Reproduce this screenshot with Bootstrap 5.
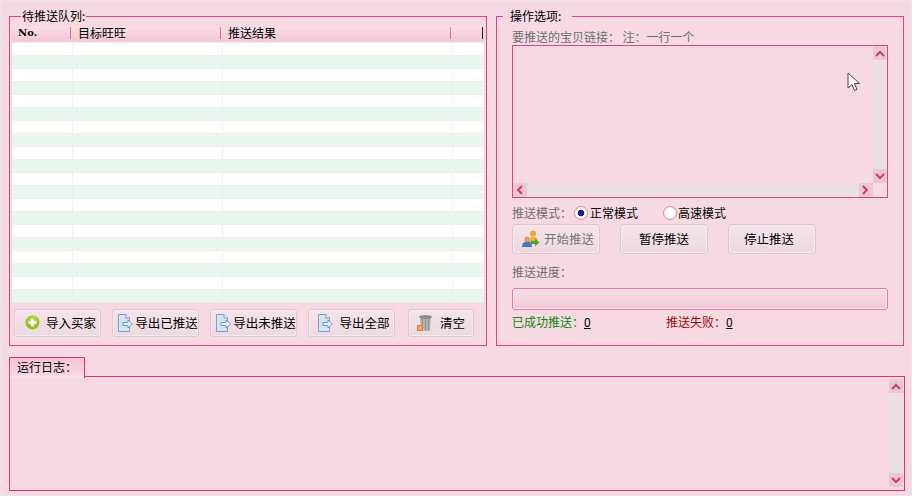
<!DOCTYPE html>
<html lang="zh"><head><meta charset="utf-8"><title>推送</title>
<link href="https://cdn.jsdelivr.net/npm/bootstrap@5.3.0/dist/css/bootstrap.min.css" rel="stylesheet">
<style>
html,body{margin:0;height:100%}
body{background:#f7d9e3;font:12px/14px "Noto Sans CJK SC","Liberation Sans",sans-serif;color:#000;overflow:hidden}
.shell{width:912px;height:496px;border:1px solid #ebe6e8;padding:8px 7px 0 8px;position:relative}
.tophalf{height:337px;gap:9px}
fieldset.grp{border:1px solid #d9487c;margin:0;padding:0;height:337px;min-width:0}
fieldset.grp legend{float:none;width:auto;font-size:12px;line-height:14px;height:14px;margin:0;padding:0}
.grp-left{width:479px;padding:0 2px!important}
.grp-left legend{margin-left:9px!important;padding:0 1px!important}
.grp-right{width:409px;padding:0 15px!important}
.grp-right legend{margin-left:-9px!important;padding:0 11px 0 7px!important}
.qtable{width:472px;margin:3px 0 0;table-layout:fixed;border-collapse:collapse;--bs-table-bg:transparent}
.qtable th{height:16px;padding:0 0 2px 6px;font-weight:400;line-height:13px;background:linear-gradient(#f9dde5,#f4c8d5);border-bottom:1px solid #eef0ee;position:relative;font-size:12px}
.qtable th.hs::after{content:"";position:absolute;right:1px;top:1px;height:12px;width:1px;background:#e8708f}
.qtable th.he::after{content:"";position:absolute;right:1px;top:1px;height:12px;width:1px;background:#222}
.qtable th.nohead{font:700 10px/13px "DejaVu Serif","Liberation Serif",serif}
.qtable td{height:13px;padding:0;border-right:1px solid #eeeeee;border-bottom:1px solid #eeeeee;background:#fff}
.qtable tr:nth-child(even) td{background:#e8f6ee}
.qtable td:last-child{border-right:0}
.skbtn{height:28px;border:1px solid #e0c8d2;border-radius:3px;background:linear-gradient(#f6e4ea,#ecd9e0);font-size:12.5px;line-height:14px;padding:0;color:#000;display:flex;align-items:center;justify-content:center;gap:2px;box-shadow:inset 0 0 0 1px #f7e9ee}
.skbtn svg{flex:none}
.skbtn.off{color:#777}
.skbtn.nudge{padding-left:4px}
.skbtn.nudge-m{padding-left:6px}
.skbtn.nudge-l{padding-right:6px}
.btnrow-l{margin:6px 0 0 2px;gap:11px}
.w87{width:87px}.w66{width:66px}.w88{width:88px}
.gap-last{margin-left:2px}
.graytxt{color:#6f6f6f}
.urlbox{width:376px;height:153px;border:1px solid #d9487c;display:grid;grid-template-columns:1fr 14px;grid-template-rows:1fr 14px;position:relative;margin-top:1px}
.vbar{display:flex;flex-direction:column;background:#ece0e6;justify-content:space-between}
.hbar{display:flex;background:#ece0e6;justify-content:space-between}
.sbtn{width:14px;height:14px;background:#e8c8d6;display:flex;align-items:center;justify-content:center;flex:none}
.cursorpic{position:absolute;left:334px;top:26px}
.radio-sk{width:14px;height:14px;margin:0;appearance:none;border:1px solid #d98aa0;border-radius:50%;background:radial-gradient(circle,#fff 40%,#eee 80%);flex:none}
.radio-sk:checked{background:radial-gradient(circle,#1a1a9a 0 3px,#fff 3.6px,#eee 90%)}
.moderow{margin-top:7px;height:16px;align-items:center}
.btnrow-r{margin-top:3px;gap:20px}
.btnrow-r .skbtn{height:30px}
.progressbar{width:376px;height:22px;border:1px solid #ec7aa0;border-radius:3px;background:linear-gradient(#f5dfe6,#f2c7d5);box-shadow:inset 0 0 0 1px #f8e6ec;margin-top:9px}
.stats{margin-top:5px;height:14px}
.okc{color:#0a8a0a}.failc{color:#990a0a}
.stats u{color:#000}
.lbl-top{margin-top:7px;height:14px}
.logtab{width:76px;height:21px;border:1px solid #e0326f;border-bottom:0;background:linear-gradient(#f8c4d5,#f7d5df 80%,#f8e6ec);padding:2px 0 0 7px;position:relative;z-index:1;font-size:12px;margin:11px 0 -2px 0}
.logpanel{width:896px;height:115px;border:1px solid #e0326f;padding:2px 1px 2px 0;display:flex;justify-content:flex-end}
.logpanel .vbar{width:14px;height:108px}
</style></head><body>
<div class="shell d-flex flex-column">
 <div class="tophalf d-flex">
  <fieldset class="grp grp-left">
   <legend>待推送队列:</legend>
   <table class="qtable"><colgroup><col style="width:60px"><col style="width:150px"><col style="width:230px"><col></colgroup>
    <thead><tr><th class="nohead hs">No.</th><th class="hs">目标旺旺</th><th class="hs">推送结果</th><th class="he"></th></tr></thead>
    <tbody>
    <tr><td></td><td></td><td></td><td></td></tr><tr><td></td><td></td><td></td><td></td></tr>
    <tr><td></td><td></td><td></td><td></td></tr><tr><td></td><td></td><td></td><td></td></tr>
    <tr><td></td><td></td><td></td><td></td></tr><tr><td></td><td></td><td></td><td></td></tr>
    <tr><td></td><td></td><td></td><td></td></tr><tr><td></td><td></td><td></td><td></td></tr>
    <tr><td></td><td></td><td></td><td></td></tr><tr><td></td><td></td><td></td><td></td></tr>
    <tr><td></td><td></td><td></td><td></td></tr><tr><td></td><td></td><td></td><td></td></tr>
    <tr><td></td><td></td><td></td><td></td></tr><tr><td></td><td></td><td></td><td></td></tr>
    <tr><td></td><td></td><td></td><td></td></tr><tr><td></td><td></td><td></td><td></td></tr>
    <tr><td></td><td></td><td></td><td></td></tr><tr><td></td><td></td><td></td><td></td></tr>
    <tr><td></td><td></td><td></td><td></td></tr><tr><td></td><td></td><td></td><td></td></tr>
    </tbody>
   </table>
   <div class="d-flex btnrow-l">
    <button class="skbtn w87 nudge-m" style="gap:6px"><svg width="15" height="15" viewBox="0 0 15 15"><circle cx="7.500" cy="7.500" r="7" fill="#8cc21f"/><circle cx="7.500" cy="6" r="5" fill="#a8d63c"/><path d="M6.200 3.500h2.600v2.700h2.700v2.600H8.800v2.700H6.200V8.800H3.500V6.200h2.700z" fill="#fff"/></svg>导入买家</button>
    <button class="skbtn w87 nudge"><svg width="16" height="18" viewBox="0 0 16 18"><path d="M1.500.5h7.500l3.500 3.500v13.500h-11z" fill="#d3e4f3" stroke="#7f9fc4"/><path d="M9 .5v3.500h3.500" fill="#f4f9fd" stroke="#7f9fc4"/><path d="M6 8.500h5v-2.500l4.500 4-4.500 4v-2.500H6z" fill="#f2f7fb" stroke="#5f8fc0" stroke-width=".9"/></svg>导出已推送</button>
    <button class="skbtn w87 nudge"><svg width="16" height="18" viewBox="0 0 16 18"><path d="M1.500.5h7.500l3.500 3.500v13.500h-11z" fill="#d3e4f3" stroke="#7f9fc4"/><path d="M9 .5v3.500h3.500" fill="#f4f9fd" stroke="#7f9fc4"/><path d="M6 8.500h5v-2.500l4.500 4-4.500 4v-2.500H6z" fill="#f2f7fb" stroke="#5f8fc0" stroke-width=".9"/></svg>导出未推送</button>
    <button class="skbtn w87 nudge" style="gap:6px"><svg width="16" height="18" viewBox="0 0 16 18"><path d="M1.500.5h7.500l3.500 3.500v13.500h-11z" fill="#d3e4f3" stroke="#7f9fc4"/><path d="M9 .5v3.500h3.500" fill="#f4f9fd" stroke="#7f9fc4"/><path d="M6 8.500h5v-2.500l4.500 4-4.500 4v-2.500H6z" fill="#f2f7fb" stroke="#5f8fc0" stroke-width=".9"/></svg>导出全部</button>
    <button class="skbtn w66 gap-last" style="gap:7px"><svg width="16" height="17" viewBox="0 0 16 17"><path d="M3 4h11l-1 13H4z" fill="#b4b4b0"/><path d="M5.500 5v11M8.500 5v11M11.500 5v11" stroke="#8d8d89" stroke-width="1"/><ellipse cx="8.500" cy="3" rx="6.500" ry="2" fill="#8c8c88"/><rect x="0" y="11" width="6" height="6" fill="#ee7a33"/><path d="M1 12l4 4M5 12l-4 4" stroke="#fbd6b8" stroke-width=".8"/></svg>清空</button>
   </div>
  </fieldset>
  <fieldset class="grp grp-right">
   <legend>操作选项:</legend>
   <div class="graytxt lbl-top">要推送的宝贝链接： 注：一行一个</div>
   <div class="urlbox">
    <div></div>
    <div class="vbar"><span class="sbtn"><svg width="10" height="7" viewBox="0 0 10 7"><path d="M1 6l4-4 4 4" fill="none" stroke="#e0306a" stroke-width="2"/></svg></span><span class="sbtn"><svg width="10" height="7" viewBox="0 0 10 7"><path d="M1 1l4 4 4-4" fill="none" stroke="#e0306a" stroke-width="2"/></svg></span></div>
    <div class="hbar"><span class="sbtn"><svg width="7" height="10" viewBox="0 0 7 10"><path d="M6 1L2 5l4 4" fill="none" stroke="#e0306a" stroke-width="2"/></svg></span><span class="sbtn"><svg width="7" height="10" viewBox="0 0 7 10"><path d="M1 1l4 4-4 4" fill="none" stroke="#e0306a" stroke-width="2"/></svg></span></div>
    <div></div>
    <svg class="cursorpic" width="14" height="21" viewBox="0 0 14 21"><path d="M1 1v15l4-3.500 2.500 6 2.500-1-2.500-6h5z" fill="#fff" stroke="#445" stroke-width="1"/></svg>
   </div>
   <div class="d-flex moderow">
    <span class="graytxt" style="width:62px">推送模式：</span>
    <input type="radio" class="radio-sk" name="m" checked>
    <span style="width:75px;padding-left:2px">正常模式</span>
    <input type="radio" class="radio-sk" name="m">
    <span style="padding-left:1px">高速模式</span>
   </div>
   <div class="d-flex btnrow-r">
    <button class="skbtn w88 off nudge" style="gap:4px"><svg width="18" height="18" viewBox="0 0 18 18"><circle cx="11" cy="3.500" r="3" fill="#e8a63a"/><path d="M6 13c0-5 2-6.500 5-6.500s5 1.500 5 6.500z" fill="#e6b04a"/><circle cx="5" cy="9" r="2.600" fill="#e89a5a"/><path d="M0 17c0-4 2-5.500 5-5.500s5 1.500 5 5.500z" fill="#4a78c8"/><path d="M9 11h4V8.500l4.500 4-4.500 4V14H9z" fill="#4caa2a"/></svg>开始推送</button>
    <button class="skbtn w88">暂停推送</button>
    <button class="skbtn w88 nudge-l">停止推送</button>
   </div>
   <div class="graytxt" style="margin-top:11px">推送进度：</div>
   <div class="progressbar"></div>
   <div class="d-flex stats">
    <span class="okc" style="width:154px">已成功推送：<u>0</u></span>
    <span class="failc">推送失败：<u>0</u></span>
   </div>
  </fieldset>
 </div>
 <div class="logtab">运行日志：</div>
 <div class="logpanel"><div class="vbar"><span class="sbtn"><svg width="10" height="7" viewBox="0 0 10 7"><path d="M1 6l4-4 4 4" fill="none" stroke="#e0306a" stroke-width="2"/></svg></span><span class="sbtn"><svg width="10" height="7" viewBox="0 0 10 7"><path d="M1 1l4 4 4-4" fill="none" stroke="#e0306a" stroke-width="2"/></svg></span></div></div>
</div>
<script src="https://cdn.jsdelivr.net/npm/bootstrap@5.3.0/dist/js/bootstrap.bundle.min.js"></script>
</body></html>
